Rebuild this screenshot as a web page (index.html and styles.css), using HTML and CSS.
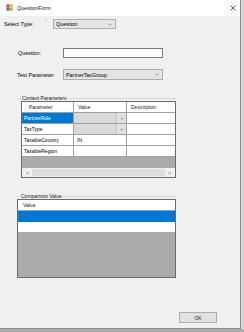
FILE: index.html
```html
<!DOCTYPE html>
<html lang="en">
<head>
  <meta charset="UTF-8">
  <title>QuestionForm</title>
  <link rel="stylesheet" href="styles.css">
</head>
<body>

  <div class="window">
    <div class="titlebar">
      <svg class="app-icon" width="7" height="7" viewBox="0 0 7 7">
        <rect x="0" y="0" width="7" height="7" fill="#f4f4f4" stroke="#8a8a8a" stroke-width="0.6"/>
        <rect x="0.6" y="0.6" width="3" height="3" fill="#e04a2a"/>
        <rect x="3.8" y="0.6" width="2.6" height="3" fill="#f2c12e"/>
        <rect x="0.6" y="3.8" width="3" height="2.6" fill="#2f7fd0"/>
        <rect x="3.8" y="3.8" width="2.6" height="2.6" fill="#e6a23c"/>
      </svg>
      <span class="title">QuestionForm</span>
      <svg class="close" width="6" height="6" viewBox="0 0 6 6">
        <path d="M0.5 0.5 L5.5 5.5 M5.5 0.5 L0.5 5.5" stroke="#3c3c3c" stroke-width="0.8"/>
      </svg>
    </div>

    <div class="form">
      <div class="row row-type">
        <label class="lbl lbl-type">Select Type:</label>
        <span class="required">*</span>
        <div class="combo combo-type">
          <span>Question</span>
          <svg class="chev" width="4" height="3" viewBox="0 0 4 3"><path d="M0.3 0.6 L2 2.3 L3.7 0.6" fill="none" stroke="#606060" stroke-width="0.6"/></svg>
        </div>
      </div>

      <div class="row row-question">
        <label class="lbl lbl-question">Question:</label>
        <div class="textbox"></div>
      </div>

      <div class="row row-param">
        <label class="lbl lbl-param">Test Parameter:</label>
        <div class="combo combo-wide">
          <span>PartnerTaxGroup</span>
          <svg class="chev" width="4" height="3" viewBox="0 0 4 3"><path d="M0.3 0.6 L2 2.3 L3.7 0.6" fill="none" stroke="#606060" stroke-width="0.6"/></svg>
        </div>
      </div>

      <fieldset class="group group-context">
        <legend>Context Parameters</legend>
        <div class="grid grid-context">
          <div class="cell head head-first">Parameter</div>
          <div class="cell head">Value</div>
          <div class="cell head last">Description</div>

          <div class="cell selected">PartnerRole</div>
          <div class="cell combo-cell"><span class="drop"><svg width="4" height="3" viewBox="0 0 4 3"><path d="M0.3 0.6 L2 2.3 L3.7 0.6" fill="none" stroke="#606060" stroke-width="0.6"/></svg></span></div>
          <div class="cell last"></div>

          <div class="cell">TaxType</div>
          <div class="cell combo-cell"><span class="drop"><svg width="4" height="3" viewBox="0 0 4 3"><path d="M0.3 0.6 L2 2.3 L3.7 0.6" fill="none" stroke="#606060" stroke-width="0.6"/></svg></span></div>
          <div class="cell last"></div>

          <div class="cell">TaxableCountry</div>
          <div class="cell value">IN</div>
          <div class="cell last"></div>

          <div class="cell">TaxableRegion</div>
          <div class="cell"></div>
          <div class="cell last"></div>

          <div class="empty"></div>
          <div class="hscroll">
            <span class="arrow">&lt;</span>
            <span class="thumb"></span>
            <span class="arrow">&gt;</span>
          </div>
        </div>
      </fieldset>

      <fieldset class="group group-compare">
        <legend>Comparison Value</legend>
        <div class="grid grid-compare">
          <div class="cell head head-compare">Value</div>
          <div class="cell selected-row"></div>
          <div class="cell blank-row"></div>
          <div class="empty empty-tall"></div>
        </div>
      </fieldset>

      <div class="actions">
        <button class="btn-ok">OK</button>
      </div>
    </div>
  </div>

</body>
</html>
```

FILE: styles.css
```css
html, body {
  margin: 0;
  padding: 0;
}

body {
  width: 244px;
  height: 332px;
  overflow: hidden;
  background-color: #a9adb2;
  font-family: "Liberation Sans", Arial, sans-serif;
  font-size: 5.4px;
  color: #000;
}

.window {
  width: 240px;
  height: 328px;
  background-color: #f0f0f0;
  border-right: 1px solid #8c8c8c;
  border-bottom: 1px solid #8c8c8c;
  box-shadow: 3px 0 0 #dadada;
}

/* title bar */

.titlebar {
  height: 16px;
  background-color: #fff;
  display: flex;
  align-items: center;
  padding-left: 6px;
  box-sizing: border-box;
}

.app-icon {
  display: block;
  margin-top: -1px;
}

.title {
  margin-left: 4px;
  font-size: 5.3px;
  color: #111;
}

.close {
  display: block;
  margin-left: auto;
  margin-right: 4px;
  margin-top: -1px;
}

/* form rows */

.row {
  display: flex;
  align-items: center;
}

.lbl {
  line-height: 10px;
}

.row-type {
  margin-top: 3px;
  height: 10px;
  padding-left: 4px;
}

.lbl-type {
  width: 41px;
}

.required {
  color: #e0301e;
  font-size: 4px;
  align-self: flex-start;
  margin-top: -1px;
  width: 8px;
}

.combo {
  height: 10px;
  box-sizing: border-box;
  background-color: #e5e5e5;
  border: 1px solid #adadad;
  display: flex;
  align-items: center;
  padding-left: 2px;
  padding-right: 3px;
}

.combo span {
  flex: 1;
}

.chev {
  display: block;
}

.combo-type {
  width: 63px;
}

.row-question {
  margin-top: 19px;
  height: 10px;
  padding-left: 18px;
}

.lbl-question {
  width: 45px;
}

.textbox {
  width: 100px;
  height: 10px;
  box-sizing: border-box;
  background-color: #fff;
  border: 1px solid #7a7a7a;
}

.row-param {
  margin-top: 11px;
  height: 11px;
  padding-left: 17px;
}

.lbl-param {
  width: 46px;
}

.combo-wide {
  width: 100px;
  height: 11px;
}

/* group boxes */

.group {
  border: 0;
  border-top: 1px solid #d7d7d7;
  padding: 0;
  min-width: 0;
}

.group legend {
  font-size: 5px;
  line-height: 6px;
  padding: 0 1px;
  margin-left: 3px;
  color: #111;
}

.group-context {
  margin: 15px 0 0 18px;
  width: 159px;
}

.group-compare {
  margin: 15px 0 0 17px;
  width: 159px;
}

/* data grids */

.grid {
  display: grid;
  border: 1px solid #6a6a6a;
  background-color: #fff;
  font-size: 5px;
}

.grid-context {
  margin-left: 3px;
  width: 155px;
  box-sizing: border-box;
  grid-template-columns: 52px 53px 1fr;
}

.cell {
  height: 10px;
  line-height: 10px;
  border-right: 1px solid #a0a0a0;
  border-bottom: 1px solid #a0a0a0;
  padding-left: 2px;
  white-space: nowrap;
  overflow: hidden;
}

.cell.last {
  border-right: 0;
}

.head {
  padding-left: 4px;
  color: #222;
}

.head-first {
  padding-left: 7px;
}

.selected {
  background-color: #0078d7;
  color: #fff;
}

.combo-cell {
  padding-left: 0;
  background-color: #d9d9d9;
  display: flex;
  justify-content: flex-end;
}

.drop {
  width: 9px;
  height: 10px;
  border-left: 1px solid #c4c4c4;
  background-color: #e2e2e2;
  display: flex;
  align-items: center;
  justify-content: center;
}

.drop svg {
  display: block;
}

.value {
  padding-left: 3px;
}

.empty {
  grid-column: 1 / -1;
  height: 11px;
  background-color: #ababab;
}

.hscroll {
  grid-column: 1 / -1;
  height: 9px;
  background-color: #f0f0f0;
  display: flex;
  align-items: center;
  padding: 0 3px;
  color: #555;
  font-size: 5px;
}

.hscroll .arrow {
  width: 5px;
  text-align: center;
}

.thumb {
  flex: 1;
  height: 7px;
  margin: 0 2px;
  background-color: #dedede;
}

.grid-compare {
  width: 159px;
  box-sizing: border-box;
  grid-template-columns: 1fr;
}

.head-compare {
  border-right: 0;
  padding-left: 5px;
}

.selected-row {
  background-color: #0078d7;
  border-right: 0;
  border-bottom: 1px solid #0078d7;
}

.blank-row {
  border-right: 0;
  border-bottom: 0;
}

.empty-tall {
  height: 45px;
}

/* buttons */

.actions {
  display: flex;
  margin-top: 34px;
  padding-left: 179px;
}

.btn-ok {
  width: 38px;
  height: 11px;
  padding: 0;
  font-family: "Liberation Sans", Arial, sans-serif;
  font-size: 5px;
  color: #222;
  background-color: #e1e1e1;
  border: 1px solid #adadad;
  border-radius: 0;
}
```
